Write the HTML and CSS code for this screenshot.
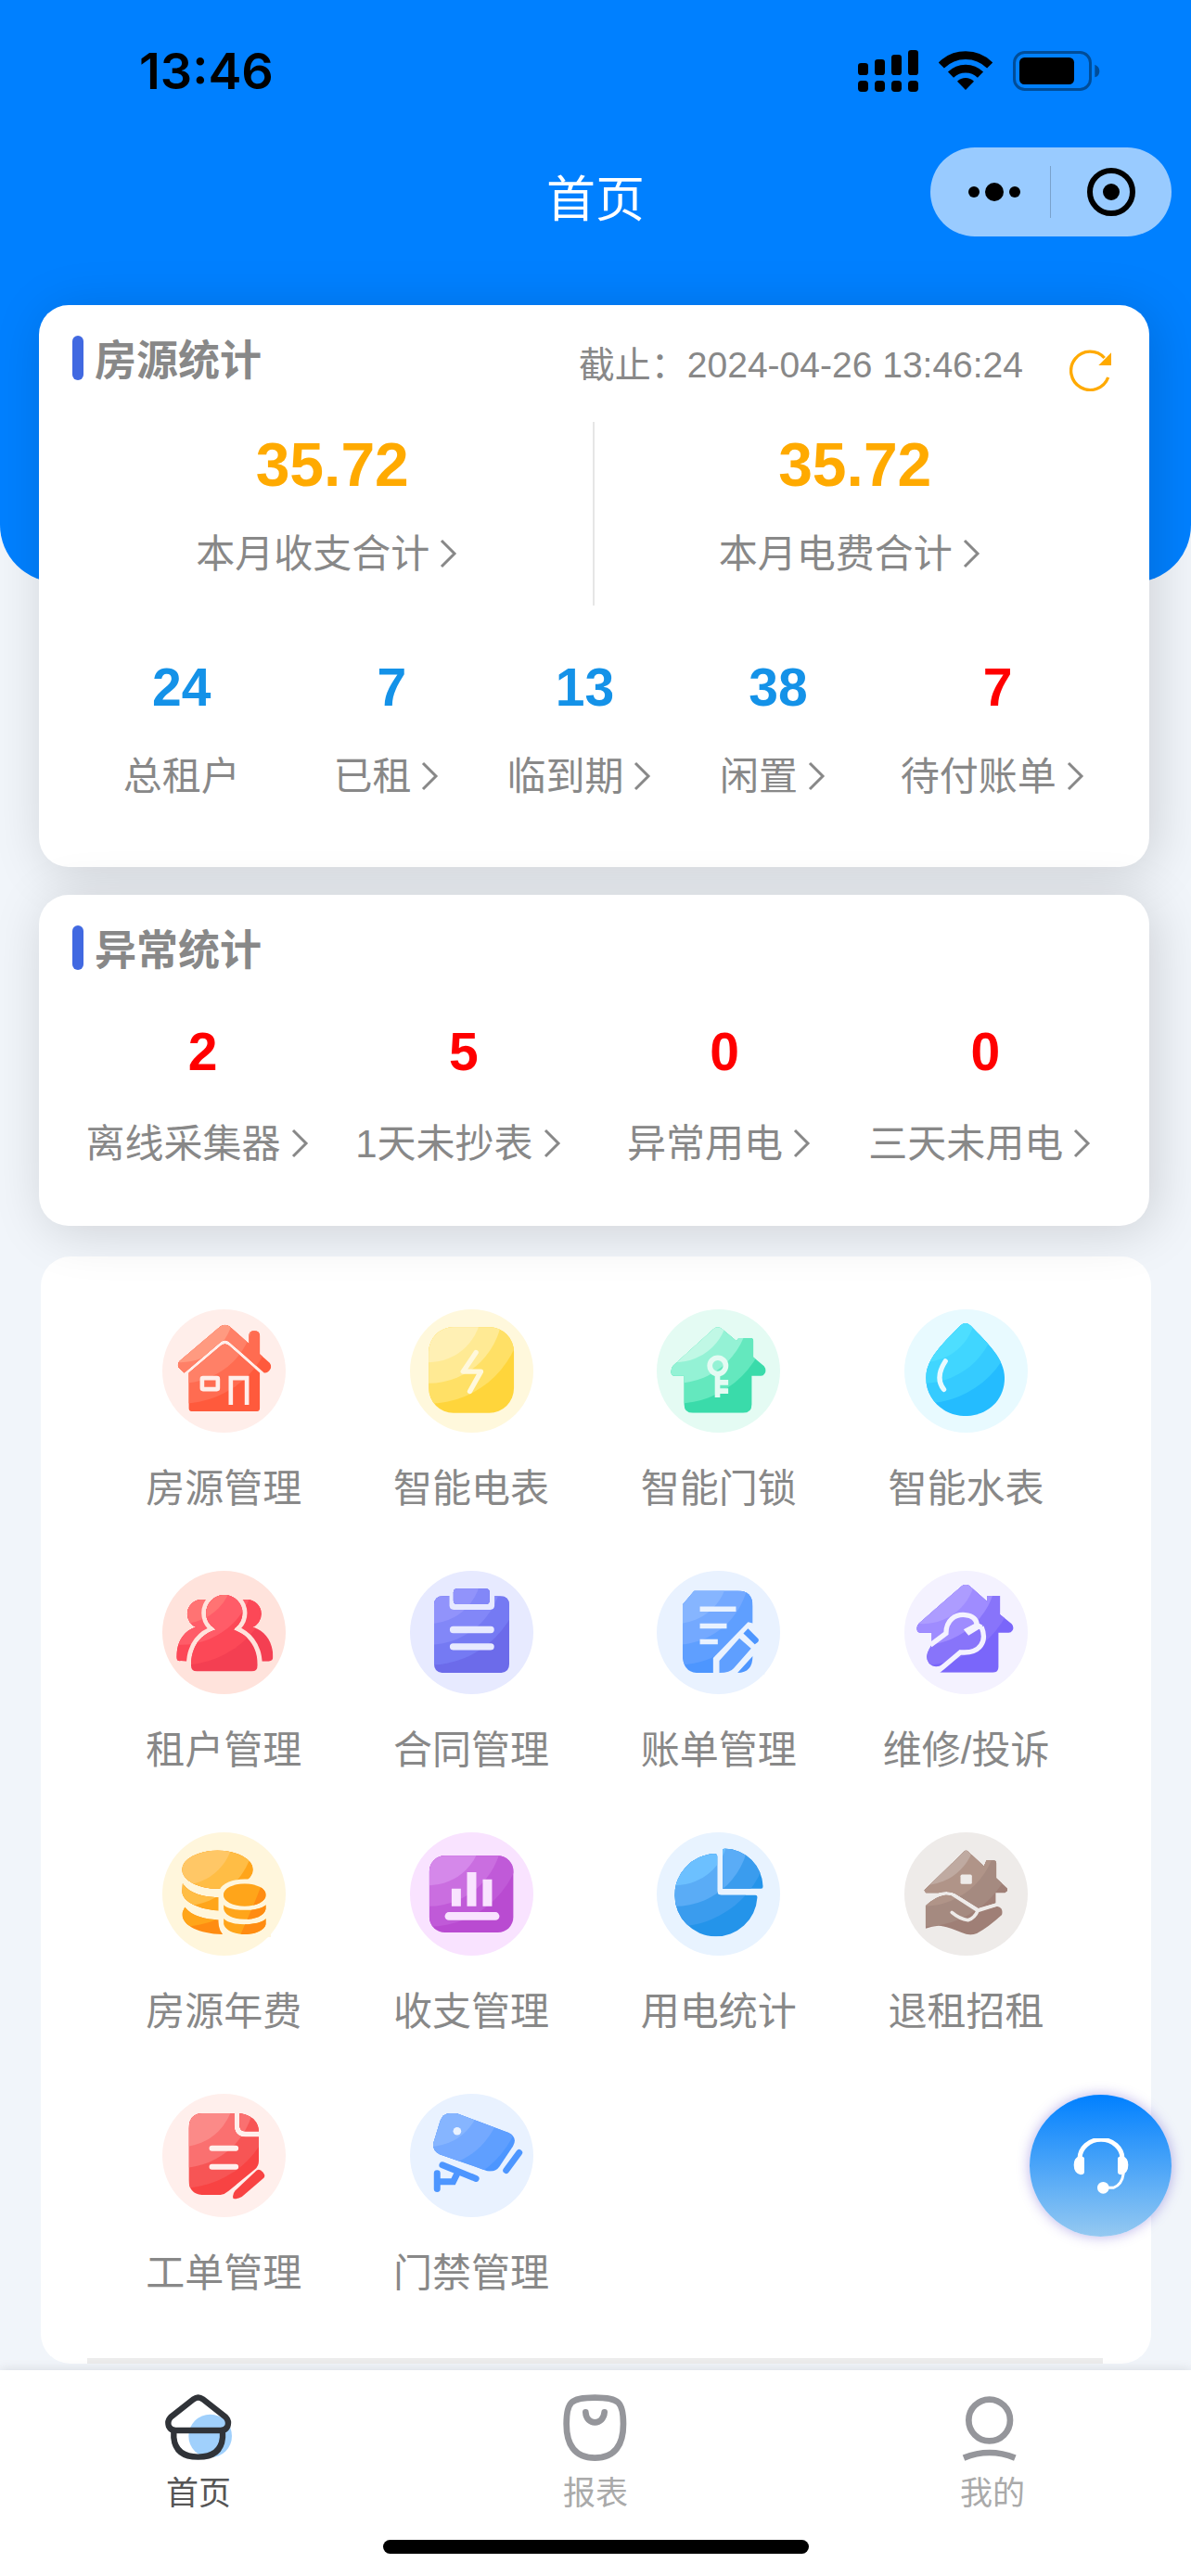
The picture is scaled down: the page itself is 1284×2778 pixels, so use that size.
FILE: index.html
```html
<!DOCTYPE html>
<html lang="zh-CN">
<head>
<meta charset="utf-8">
<meta name="viewport" content="width=device-width, initial-scale=1">
<title>首页</title>
<link rel="stylesheet" href="styles.css">
</head>
<body>
<svg class="defs" aria-hidden="true">
  <defs>
    <symbol id="bands" viewBox="0 0 400 400">
      <rect class="tone-1" width="400" height="400"/>
      <circle class="tone-2" cx="60" cy="0" r="306"/>
      <circle class="tone-3" cx="60" cy="0" r="240"/>
      <circle class="tone-4" cx="60" cy="0" r="172"/>
    </symbol>
    <symbol id="chevron" viewBox="0 0 42 42">
      <path d="M13 6 L27 20 L13 34" fill="none" stroke="currentColor" stroke-width="3"/>
    </symbol>
    <clipPath id="c-house"><path d="M71 206L52 188Q48 176 56 168L188 56Q203 44 218 56L281 111V86Q281 70 298 70Q316 70 316 86V145L348 174Q356 184 350 194Q342 208 330 206L220 108Q203 92 186 108ZM86 206L190 118Q203 108 216 118L316 206V320Q316 331 305 331H97Q86 331 86 320Z"/></clipPath>
    <clipPath id="c-meter"><rect x="61" y="58" width="276" height="278" rx="80"/></clipPath>
    <clipPath id="c-lock"><path d="M184 64Q198 52 212 64L258 102L266 93H305Q313 93 313 101V155L348 184Q358 198 350 208Q346 216 338 216H308V308Q308 336 280 336H117Q89 336 89 308V216H60Q46 216 46 202Q46 190 54 182Z"/></clipPath>
    <clipPath id="c-water"><path d="M180 54Q198 36 216 54C270 110 325 160 325 222C325 300 265 346 198 346C130 346 70 295 70 222C70 160 126 110 180 54Z"/></clipPath>
    <clipPath id="c-people-back"><circle cx="128" cy="140" r="47"/><circle cx="274" cy="140" r="47"/><path d="M104 184C70 196 46 230 46 280Q46 294 60 292L90 294L200 200L312 294L345 294Q359 292 359 280C359 230 334 196 298 184Z"/></clipPath>
    <clipPath id="c-people"><circle cx="201" cy="137" r="59"/><path d="M166 180L172 192C130 205 93 240 93 306Q93 326 112 326H290Q309 326 309 306C309 240 272 205 232 192L238 180Z"/></clipPath>
    <clipPath id="c-contract"><path d="M108 82H292Q322 82 322 112V301Q322 331 292 331H108Q78 331 78 301V112Q78 82 108 82Z"/></clipPath>
    <clipPath id="c-contract-clip"><rect x="141" y="58" width="117" height="50" rx="12"/></clipPath>
    <clipPath id="c-bill"><path d="M122 65H262Q311 65 311 114V331H134Q84 331 84 270V110Z"/></clipPath>
    <clipPath id="c-repair"><path d="M184 51Q199 39 214 51L269 100V81H310V141L348 172Q358 184 350 194Q346 201 338 201H305V312Q305 330 287 330H110L182 264L89 236V201H54Q40 201 40 186Q40 178 48 170Z"/><path d="M89 236L130 206L182 260L125 303Q100 320 80 300Q64 278 82 252Z"/></clipPath>
    <clipPath id="c-coins"><ellipse cx="179" cy="121" rx="115" ry="62"/><path d="M66 166C90 200 130 210 193 212V254C120 252 64 225 64 190ZM73 243C95 272 140 283 186 284Q184 310 200 331C120 330 56 300 66 258Z"/></clipPath>
    <clipPath id="c-coins-front"><ellipse cx="267" cy="203" rx="69" ry="37"/><path d="M199 235C220 258 314 258 336 235V248C330 272 300 282 267 282C234 282 204 272 199 248ZM199 280C220 305 315 305 336 280V298C330 320 300 331 267 331C234 331 204 318 199 298Z"/></clipPath>
    <clipPath id="c-income"><rect x="63" y="76" width="272" height="249" rx="50"/></clipPath>
    <clipPath id="c-pie"><path d="M186 70Q196 68 196 78V190Q196 204 210 204H320Q327 204 326 212A134 134 0 1 1 186 70ZM214 60Q214 53 222 53A125 128 0 0 1 345 176Q345 183 338 183H214Z"/></clipPath>
    <clipPath id="c-hand"><path d="M64 188L194 62Q200 56 206 62L258 110L266 91H290Q298 91 298 100V148L334 182V190L326 196H296V230L240 246L170 202Q145 186 110 196H70Z"/><path d="M69 238Q105 205 135 204Q155 204 170 216L238 256Q258 252 300 240Q322 244 316 268Q270 310 235 328Q212 338 185 325Q140 305 110 303Q90 305 69 312Z"/></clipPath>
    <clipPath id="c-order"><path d="M134 63H233V100Q233 140 270 140H313V215Q313 235 300 245L215 315Q200 328 185 328H134Q86 328 86 280V111Q86 63 134 63ZM250 63Q310 72 313 122H270Q250 122 250 100Z"/></clipPath>
    <clipPath id="c-camera"><path d="M132 63H150L320 126Q350 142 334 170L290 236Q276 256 250 250L96 196Q72 184 76 160L98 88Q108 63 132 63Z"/></clipPath>
  </defs>
</svg>

<header class="hero">
  <div class="status">
    <span class="clock">13:46</span>
    <div class="signals">
      <svg width="65" height="45" viewBox="75 69 195 135" aria-hidden="true">
        <rect x="75" y="111" width="33" height="39" rx="10"/><rect x="129" y="99" width="33" height="51" rx="10"/><rect x="183" y="84" width="33" height="66" rx="10"/><rect x="237" y="69" width="33" height="81" rx="10"/>
        <rect x="75" y="168" width="33" height="36" rx="11"/><rect x="129" y="168" width="33" height="36" rx="11"/><rect x="183" y="168" width="33" height="36" rx="11"/><rect x="237" y="168" width="33" height="36" rx="11"/>
      </svg>
      <svg width="58" height="42" viewBox="338 72 174 126" aria-hidden="true">
        <g fill="none" stroke="#000" stroke-width="26"><path d="M346.500 118.500A111 111 0 0 1 503.500 118.500"/><path d="M377 149A68 68 0 0 1 473 149"/></g>
        <path d="M398 170A39 39 0 0 1 452 170L425 198Z"/>
      </svg>
      <svg width="94" height="43" viewBox="579 72 282 129" aria-hidden="true">
        <rect x="583.500" y="76.500" width="246" height="120" rx="34" fill="none" stroke="#000" stroke-opacity=".4" stroke-width="9"/>
        <rect x="600" y="93" width="177" height="87" rx="16"/><path d="M844 116Q859 122 859 137Q859 152 844 157Z" fill-opacity=".4"/>
      </svg>
    </div>
  </div>
  <div class="nav">
    <h1 class="nav-title">首页</h1>
    <div class="capsule">
      <button class="capsule-btn" type="button" aria-label="更多">
        <svg width="56" height="20" viewBox="0 0 56 20"><circle cx="6" cy="10" r="6"/><circle cx="28" cy="10" r="10"/><circle cx="50" cy="10" r="6"/></svg>
      </button>
      <button class="capsule-btn" type="button" aria-label="关闭">
        <svg width="52" height="52" viewBox="0 0 52 52"><circle cx="26" cy="26" r="23" fill="none" stroke="#000" stroke-width="6"/><circle cx="26" cy="26" r="9"/></svg>
      </button>
    </div>
  </div>
</header>

<main class="content">
  <section class="card">
    <div class="card-head">
      <h2 class="card-title">房源统计</h2>
      <span class="as-of">截止：2024-04-26 13:46:24</span>
      <button class="refresh" type="button" aria-label="刷新">
        <svg width="46" height="46" viewBox="0 0 138 138"><path d="M125 93A62 62 0 1 1 113 30" fill="none" stroke="#fa0" stroke-width="10"/><path d="M135 13V54H94Z" fill="#fa0"/></svg>
      </button>
    </div>
    <div class="money">
      <a class="stat" href="#"><strong class="num num-money">35.72</strong><span class="cap">本月收支合计<svg class="chev"><use href="#chevron"/></svg></span></a>
      <a class="stat" href="#"><strong class="num num-money">35.72</strong><span class="cap">本月电费合计<svg class="chev"><use href="#chevron"/></svg></span></a>
    </div>
    <div class="rooms">
      <div class="stat"><strong class="num">24</strong><span class="cap">总租户</span></div>
      <a class="stat" href="#"><strong class="num">7</strong><span class="cap">已租<svg class="chev"><use href="#chevron"/></svg></span></a>
      <a class="stat" href="#"><strong class="num">13</strong><span class="cap">临到期<svg class="chev"><use href="#chevron"/></svg></span></a>
      <a class="stat" href="#"><strong class="num">38</strong><span class="cap">闲置<svg class="chev"><use href="#chevron"/></svg></span></a>
      <a class="stat" href="#"><strong class="num num-alert">7</strong><span class="cap">待付账单<svg class="chev"><use href="#chevron"/></svg></span></a>
    </div>
  </section>

  <section class="card card-alerts">
    <div class="card-head">
      <h2 class="card-title">异常统计</h2>
    </div>
    <div class="alerts">
      <a class="stat" href="#"><strong class="num num-alert">2</strong><span class="cap">离线采集器<svg class="chev"><use href="#chevron"/></svg></span></a>
      <a class="stat" href="#"><strong class="num num-alert">5</strong><span class="cap">1天未抄表<svg class="chev"><use href="#chevron"/></svg></span></a>
      <a class="stat" href="#"><strong class="num num-alert">0</strong><span class="cap">异常用电<svg class="chev"><use href="#chevron"/></svg></span></a>
      <a class="stat" href="#"><strong class="num num-alert">0</strong><span class="cap">三天未用电<svg class="chev"><use href="#chevron"/></svg></span></a>
    </div>
  </section>

  <section class="panel">
    <div class="apps">
      <a class="app" href="#">
        <svg class="icon i-house" viewBox="0 0 400 400"><circle class="disc" cx="200" cy="200" r="200"/><g clip-path="url(#c-house)"><use href="#bands"/></g><g class="cut" stroke-width="14"><rect x="129" y="223" width="51" height="36" rx="3"/><path d="M222 310V223H274V310"/></g></svg>
        <span>房源管理</span></a>
      <a class="app" href="#">
        <svg class="icon i-meter" viewBox="0 0 400 400"><circle class="disc" cx="200" cy="200" r="200"/><g clip-path="url(#c-meter)"><use href="#bands"/></g><path class="cut round" stroke-width="16" d="M214 140L172 202H230L194 266"/></svg>
        <span>智能电表</span></a>
      <a class="app" href="#">
        <svg class="icon i-lock" viewBox="0 0 400 400"><circle class="disc" cx="200" cy="200" r="200"/><g clip-path="url(#c-lock)"><use href="#bands"/></g><g class="cut" stroke-width="17"><circle cx="198" cy="183" r="26"/><path d="M197 210V286M200 237H232M200 265H232"/></g></svg>
        <span>智能门锁</span></a>
      <a class="app" href="#">
        <svg class="icon i-water" viewBox="0 0 400 400"><circle class="disc" cx="200" cy="200" r="200"/><g clip-path="url(#c-water)"><use href="#bands"/></g><path class="cut round" stroke-width="16" d="M133 168Q98 222 128 260"/></svg>
        <span>智能水表</span></a>
      <a class="app" href="#">
        <svg class="icon i-people" viewBox="0 0 400 400"><circle class="disc" cx="200" cy="200" r="200"/><g clip-path="url(#c-people-back)"><use href="#bands"/></g><g class="gap gap-wide"><circle cx="201" cy="137" r="59"/><path d="M172 192C130 205 93 240 93 306Q93 326 112 326H290Q309 326 309 306C309 240 272 205 232 192Z"/></g><g clip-path="url(#c-people)"><use href="#bands"/></g></svg>
        <span>租户管理</span></a>
      <a class="app" href="#">
        <svg class="icon i-contract" viewBox="0 0 400 400"><circle class="disc" cx="200" cy="200" r="200"/><g clip-path="url(#c-contract)"><use href="#bands"/></g><path class="gap" d="M128 60H274V112Q274 126 260 126H142Q128 126 128 112Z"/><g clip-path="url(#c-contract-clip)"><use href="#bands"/></g><path class="cut round" stroke-width="22" d="M140 191H262M140 246H262"/></svg>
        <span>合同管理</span></a>
      <a class="app" href="#">
        <svg class="icon i-bill" viewBox="0 0 400 400"><circle class="disc" cx="200" cy="200" r="200"/><g clip-path="url(#c-bill)"><use href="#bands"/></g><path class="cut" stroke-width="16" d="M140 124H257M140 179H227M140 230H198"/><path class="gap" d="M183 336V283L296 166L350 180V336Z"/><path class="tone-2" d="M203 331V292L268 219L306 252L250 316Q238 331 203 331Z"/><path class="tone-1" d="M281 203L296 187L329 220Q335 230 318 238ZM262 331L311 277Q311 331 262 331Z"/></svg>
        <span>账单管理</span></a>
      <a class="app" href="#">
        <svg class="icon i-repair" viewBox="0 0 400 400"><circle class="disc" cx="200" cy="200" r="200"/><g clip-path="url(#c-repair)"><use href="#bands"/></g><path class="cut" stroke-width="16" d="M84 241L135 203C135 160 165 140 197 143C222 145 234 158 236 176L200 196M250 182C268 225 250 270 182 264L106 328M236 176L250 184"/><path class="gap" d="M192 190L236 168L250 184L208 210Z"/></svg>
        <span>维修/投诉</span></a>
      <a class="app" href="#">
        <svg class="icon i-coins" viewBox="0 0 400 400"><circle class="disc" cx="200" cy="200" r="200"/><g clip-path="url(#c-coins)"><use href="#bands"/></g><path class="gap" d="M182 203C182 170 220 152 267 152C314 152 352 170 352 203V340H205Q182 320 182 290Z"/><g clip-path="url(#c-coins-front)"><rect class="tone-2" width="400" height="400"/><path class="tone-1" d="M330 150L298 230L250 340H400V150Z"/></g></svg>
        <span>房源年费</span></a>
      <a class="app" href="#">
        <svg class="icon i-income" viewBox="0 0 400 400"><circle class="disc" cx="200" cy="200" r="200"/><g clip-path="url(#c-income)"><use href="#bands"/></g><path class="gap" d="M135 183H165V240H135ZM185 129H215V240H185ZM236 153H266V240H236Z"/><path class="cut round" stroke-width="26" d="M126 272H277"/></svg>
        <span>收支管理</span></a>
      <a class="app" href="#">
        <svg class="icon i-pie" viewBox="0 0 400 400"><circle class="disc" cx="200" cy="200" r="200"/><g clip-path="url(#c-pie)"><use href="#bands"/></g></svg>
        <span>用电统计</span></a>
      <a class="app" href="#">
        <svg class="icon i-hand" viewBox="0 0 400 400"><circle class="disc" cx="200" cy="200" r="200"/><g clip-path="url(#c-hand)"><use href="#bands"/></g><rect class="gap" x="182" y="137" width="37" height="31" rx="5"/><path class="cut round" stroke-width="11" d="M154 260Q180 282 206 285Q228 278 238 254L302 234M238 254L160 204"/></svg>
        <span>退租招租</span></a>
      <a class="app" href="#">
        <svg class="icon i-order" viewBox="0 0 400 400"><circle class="disc" cx="200" cy="200" r="200"/><g clip-path="url(#c-order)"><use href="#bands"/></g><path class="cut round" stroke-width="18" d="M161 177H238M161 237H238"/><path class="tone-1" d="M306 248Q316 242 326 254Q336 266 328 274L258 334Q244 342 230 340Q226 326 236 314Z"/></svg>
        <span>工单管理</span></a>
      <a class="app" href="#">
        <svg class="icon i-bill" viewBox="0 0 400 400"><circle class="disc" cx="200" cy="200" r="200"/><g clip-path="url(#c-camera)"><use href="#bands"/></g><circle class="gap" cx="153" cy="121" r="13"/><path class="limb" d="M105 231L214 275M88 258V308M88 285H140L155 255M354 191L312 248"/></svg>
        <span>门禁管理</span></a>
    </div>
    <div class="strip"></div>
  </section>
</main>

<button class="service" type="button" aria-label="联系客服">
  <svg width="60" height="60" viewBox="0 0 180 180"><path d="M21 66A69 62 0 0 1 159 66" fill="none" stroke="#fff" stroke-width="15"/><path d="M20 58Q36 58 36 66V108Q36 118 24 118Q2 112 2 86Q2 64 20 58ZM160 58Q144 58 144 66V108Q144 118 156 118Q178 112 178 86Q178 64 160 58Z" fill="#fff"/><path d="M163 112Q158 150 130 160H100" fill="none" stroke="#fff" stroke-width="9"/><circle cx="97" cy="160" r="19" fill="#fff"/></svg>
</button>

<footer class="tabbar">
  <nav class="tabs">
    <a class="tab tab-active" href="#">
      <svg width="72" height="72" viewBox="0 0 216 216"><circle cx="146" cy="135" r="70" fill="#a0d0fc"/><g fill="none" stroke="#303338" stroke-width="19"><path d="M92 16Q107 5 122 16L196 74Q208 86 202 104Q196 117 180 117H34Q18 117 12 104Q6 86 18 74Z"/><path d="M28 117V140Q34 203 107 203Q180 203 186 140V117"/></g></svg>
      <span>首页</span></a>
    <a class="tab" href="#">
      <svg width="72" height="72" viewBox="-4 0 216 216"><g fill="none" stroke="#95969b" stroke-width="20"><path d="M102 11C180 11 194 24 194 96C194 160 170 206 102 206C34 206 10 160 10 96C10 24 24 11 102 11Z"/><path d="M72 58C74 102 130 102 133 58" stroke-linecap="round"/></g></svg>
      <span>报表</span></a>
    <a class="tab" href="#">
      <svg width="72" height="72" viewBox="0 0 216 216"><g fill="none" stroke="#95969b" stroke-width="20"><circle cx="98" cy="84" r="67"/><path d="M15 206Q98 172 181 206"/></g></svg>
      <span>我的</span></a>
  </nav>
  <div class="home-indicator"></div>
</footer>
</body>
</html>
```
FILE: styles.css
```css
* { box-sizing: border-box; }

body {
  margin: 0;
  min-height: 100vh;
  display: flex;
  flex-direction: column;
  background: #f1f5fa;
  color: #888;
  font-family: "Liberation Sans", "Noto Sans CJK SC", sans-serif;
  font-size: 42px;
}

a { color: inherit; text-decoration: none; }
h1, h2 { margin: 0; }
button { border: 0; padding: 0; background: none; }
svg { display: block; }
.defs { position: absolute; width: 0; height: 0; }

/* header */
.hero {
  padding-bottom: 366px;
  background: #0080ff;
  border-radius: 0 0 62px 62px;
}
.status {
  display: flex;
  align-items: center;
  justify-content: space-between;
  height: 152px;
  padding: 0 98px 0 150px;
}
.clock {
  padding-top: 2px;
  font-family: Inter, sans-serif;
  font-size: 54px;
  font-weight: 600;
  line-height: 60px;
  color: #000;
}
.signals { display: flex; align-items: center; gap: 22px; }
.nav {
  display: grid;
  grid-template-columns: 1fr auto 1fr;
  align-items: center;
  height: 110px;
  padding: 0 21px;
}
.nav-title {
  grid-column: 2;
  padding-top: 18px;
  font-size: 53px;
  font-weight: 400;
  line-height: 60px;
  color: #fff;
}
.capsule {
  justify-self: end;
  display: flex;
  align-items: center;
  width: 260px;
  height: 96px;
  border-radius: 48px;
  background: #99cbff;
}
.capsule-btn {
  flex: 1;
  height: 56px;
  display: flex;
  align-items: center;
  justify-content: center;
}
.capsule-btn:first-child { flex: none; width: 129px; padding-left: 8px; }
.capsule-btn + .capsule-btn { border-left: 1px solid #7aa2cc; }

/* statistics cards */
.content {
  flex: 1;
  margin-top: -299px;
  padding: 0 45px 7px 42px;
}
.card {
  position: relative;
  padding: 33px 36px 65px;
  border-radius: 32px;
  background: #fff;
  box-shadow: 6px 6px 56px rgba(0, 0, 0, .15);
}
.card-alerts { margin-top: 30px; padding-bottom: 56px; }
.card-head {
  display: flex;
  align-items: flex-start;
  min-height: 64px;
}
.card-title {
  display: flex;
  gap: 12px;
  margin-right: auto;
  font-size: 45px;
  font-weight: 700;
  line-height: 56px;
}
.card-title::before {
  content: "";
  width: 12px;
  height: 48px;
  border-radius: 6px;
  background: #4169e1;
}
.as-of { font-size: 39px; line-height: 64px; }
.refresh { margin: 14px 4px 0 50px; }

.money, .rooms, .alerts { display: grid; }
.money { grid-template-columns: 1fr 1fr; margin-top: 29px; }
.money .stat { padding-bottom: 23px; }
.money .stat:first-child { border-right: 2px solid #e6e6e6; }
.rooms { grid-template-columns: 235fr 217fr 198fr 218fr 254fr; margin-top: 42px; }
.alerts { grid-template-columns: repeat(4, 1fr); margin-top: 26px; }

.stat {
  display: flex;
  flex-direction: column;
  align-items: center;
  gap: 19px;
}
.alerts .stat { gap: 22px; }
.num {
  font-size: 57px;
  line-height: 92px;
  color: #1492e8;
}
.num-money { font-size: 66px; color: #fa0; }
.num-alert { color: #f00; }
.cap {
  display: flex;
  align-items: center;
  line-height: 64px;
  white-space: nowrap;
}
.chev { width: 42px; height: 42px; }

/* function grid */
.panel {
  margin: 33px -2px 0 2px;
  padding: 57px 66px 0 64px;
  border-radius: 32px;
  background: #fff;
  overflow: hidden;
}
.apps {
  display: grid;
  grid-template-columns: repeat(4, 1fr);
  row-gap: 56px;
}
.app {
  display: flex;
  flex-direction: column;
  align-items: center;
  gap: 29px;
  line-height: 64px;
}
.icon { width: 133px; height: 133px; }
.strip {
  height: 6px;
  margin: 59px -14px 0;
  background: #ececec;
}

.disc, .gap { fill: var(--bg); }
.gap-wide { stroke: var(--bg); stroke-width: 30px; }
.cut { fill: none; stroke: var(--bg); }
.round { stroke-linecap: round; stroke-linejoin: round; }
.limb { fill: none; stroke: var(--t1); stroke-width: 21px; stroke-linecap: round; }
.tone-1 { fill: var(--t1); }
.tone-2 { fill: var(--t2); }
.tone-3 { fill: var(--t3); }
.tone-4 { fill: var(--t4); }

.i-house    { --bg: #ffeeea; --t1: #ff5a3c; --t2: #ff6c51; --t3: #ff8067; --t4: #ff9a80; }
.i-meter    { --bg: #fff8dc; --t1: #ffd53b; --t2: #ffe066; --t3: #ffea94; --t4: #fff0b4; }
.i-lock     { --bg: #e4fbf3; --t1: #3adbaa; --t2: #64e8be; --t3: #94f2d5; --t4: #c0f8e5; }
.i-water    { --bg: #e8faff; --t1: #24bcff; --t2: #35cbff; --t3: #40d6ff; --t4: #4ddeff; }
.i-people   { --bg: #ffe3dc; --t1: #f43f52; --t2: #fc4857; --t3: #ff5c68; --t4: #ff7373; }
.i-contract { --bg: #e7eaff; --t1: #6c6bea; --t2: #757af3; --t3: #8287f8; --t4: #9193fb; }
.i-bill     { --bg: #e9f2ff; --t1: #4d96ff; --t2: #5f9fff; --t3: #74a9ff; --t4: #86b5ff; }
.i-repair   { --bg: #f4f2ff; --t1: #7a66fa; --t2: #8874fa; --t3: #9f8cff; --t4: #ad9cff; }
.i-coins    { --bg: #fff6dc; --t1: #ff8c12; --t2: #ffa51a; --t3: #ffbd45; --t4: #ffc766; }
.i-income   { --bg: #f9e3ff; --t1: #b94bd1; --t2: #c05ad8; --t3: #ca6ee0; --t4: #d588ea; }
.i-pie      { --bg: #e8f3ff; --t1: #2494ea; --t2: #3a9cee; --t3: #5aacf6; --t4: #6cc0ff; }
.i-hand     { --bg: #eeebe9; --t1: #9f7f76; --t2: #a58a80; --t3: #b09488; --t4: #bfaaa1; }
.i-order    { --bg: #ffefec; --t1: #f84343; --t2: #f75555; --t3: #fa7070; --t4: #fb8a88; }

/* floating customer service button */
.service {
  position: fixed;
  right: 21px;
  bottom: 366px;
  display: flex;
  align-items: center;
  justify-content: center;
  width: 153px;
  height: 153px;
  border-radius: 50%;
  background: linear-gradient(#0080ff, #95c9f1);
  box-shadow: 0 0 14px rgba(80, 60, 200, .4);
}

/* bottom tabs */
.tabbar {
  position: sticky;
  bottom: 0;
  padding: 26px 0 24px;
  background: #fff;
  box-shadow: 0 0 12px rgba(0, 0, 0, .12);
}
.tabs { display: grid; grid-template-columns: repeat(3, 1fr); }
.tab {
  display: flex;
  flex-direction: column;
  align-items: center;
  gap: 9px;
  font-size: 35px;
  line-height: 52px;
  color: #aaa;
}
.tab-active { color: #555; }
.home-indicator {
  width: 459px;
  height: 15px;
  margin: 24px auto 0;
  border-radius: 8px;
  background: #000;
}
```
